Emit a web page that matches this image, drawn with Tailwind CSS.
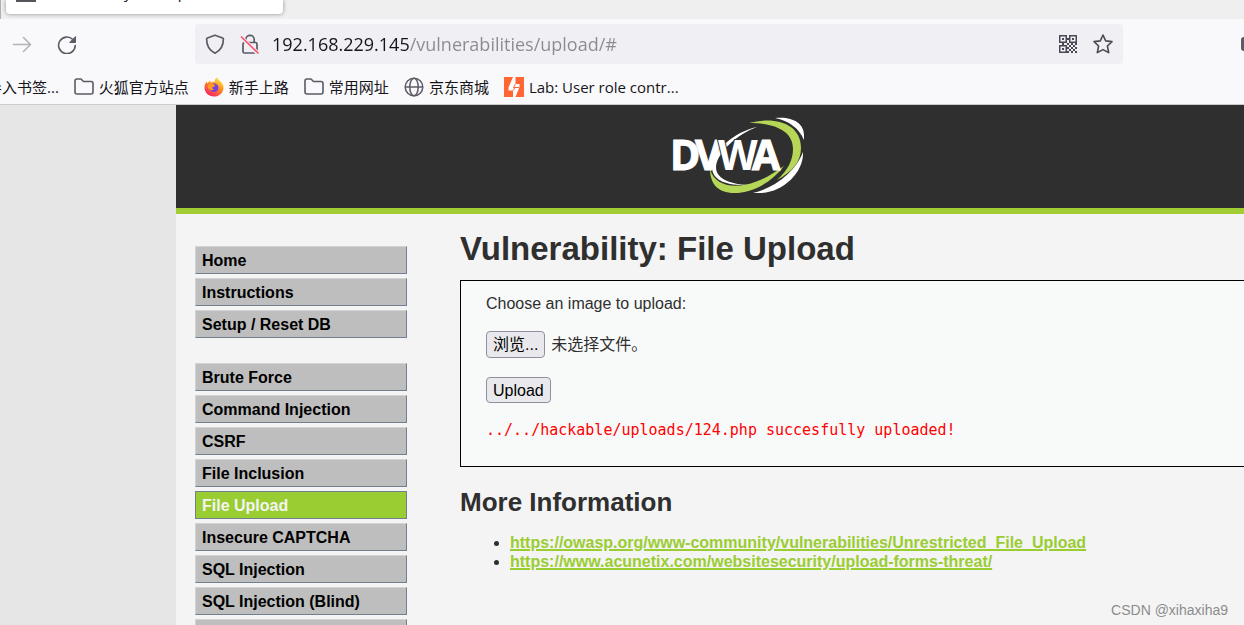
<!DOCTYPE html>
<html lang="zh-CN">
<head>
  <meta charset="UTF-8" />
  <meta name="viewport" content="width=device-width, initial-scale=1.0">
  <title>Vulnerability: File Upload :: DVWA</title>
  <script src="https://cdn.jsdelivr.net/npm/@tailwindcss/browser@4"></script>
</head>
<body class="h-screen overflow-hidden relative flex flex-col bg-[#e6e6e6] text-[#2f2f2f] font-['Liberation_Sans','Noto_Sans_CJK_SC',sans-serif]">

  <!-- Browser chrome -->
  <div class="shrink-0 bg-[#f9f9fb] border-b border-[#cccccc] text-[#15141a] font-['Open_Sans','Noto_Sans_CJK_SC',sans-serif]">

    <!-- Tab strip -->
    <div class="h-[19px] bg-[#efefef] border-l border-[#b0b0b0] pl-[5px] overflow-hidden">
      <div class="relative w-[277px] h-[14px] bg-white rounded-b shadow-[0_0_4px_rgba(0,0,0,0.4)] overflow-hidden">
        <div class="absolute left-[10px] top-0 w-5 h-[2px] bg-[#55555a]"></div>
        <span class="absolute left-[38px] -top-[18px] text-[15px] leading-5 whitespace-nowrap">Vulnerability: File Upload</span>
      </div>
    </div>

    <!-- Toolbar -->
    <div class="h-[50px] flex items-center pl-3">
      <button aria-label="Forward" class="w-5 h-5 shrink-0">
        <svg viewBox="0 0 20 20" class="w-5 h-5" fill="none" stroke="#b4b4b8" stroke-width="1.600" stroke-linecap="round" stroke-linejoin="round"><path d="M1.500 10.500H18.500M11.500 3.500l7 7-7 7"/></svg>
      </button>
      <button aria-label="Reload" class="w-5 h-5 shrink-0 ml-[25px]">
        <svg viewBox="0 0 20 20" class="w-5 h-5" fill="none" stroke="#5b5b66" stroke-width="1.600" stroke-linecap="round"><path d="M18.200 11.500A8.300 8.300 0 1 1 15.800 5.500"/><path d="M18.500 3V8.500h-5.500z" fill="#5b5b66" stroke-width="1" stroke-linejoin="round"/></svg>
      </button>
      <div class="ml-[118px] mr-[118px] flex-1 h-10 rounded bg-[#f0eff4] flex items-center px-[10px]">
        <svg viewBox="0 0 20 20" class="w-5 h-5 shrink-0" fill="none" stroke="#5b5b66" stroke-width="1.700" stroke-linejoin="round"><path d="M10 1.200l7.600 2.800c.5.200.8.600.8 1.100C18.400 11.500 16 16.500 10 19.200 4 16.500 1.600 11.500 1.600 5.100c0-.5.300-.9.800-1.100z"/></svg>
        <svg viewBox="0 0 20 20" class="w-5 h-5 shrink-0 ml-[15px]" fill="none" stroke="#5b5b66" stroke-width="1.700" stroke-linecap="round"><path d="M5.800 8V5.500a4.200 4.200 0 0 1 8.400 0V8"/><rect x="3" y="8.500" width="14" height="10.500" rx="1.500"/><path d="M1 3l17 16.500" stroke="#f0eff4" stroke-width="4"/><path d="M1.500 3l16.500 16" stroke="#ff4f6b"/></svg>
        <input type="text" aria-label="Address" value="192.168.229.145/vulnerabilities/upload/#" class="ml-3 flex-1 min-w-0 h-7 text-lg leading-7 outline-none text-transparent bg-clip-text bg-[linear-gradient(90deg,#15141a_137px,#8a8a90_137px)]">
        <button aria-label="QR code">
          <svg viewBox="0 0 18 18" class="w-[18px] h-[18px]" fill="#4a4a55"><path fill-rule="evenodd" d="M0 0h8v8H0zM1.500 1.500v5h5v-5zM10 0h8v8h-8zM11.500 1.500v5h5v-5zM0 10h8v8H0zM1.500 11.500v5h5v-5z"/><path d="M3 3h2v2H3zM13 3h2v2h-2zM3 13h2v2H3zM8 3h2v2H8zM3 8h2v2H3zM8 8h2v2H8zM12 8h2v2h-2zM16 8h2v2h-2zM10 10h2v2h-2zM14 10h2v2h-2zM8 12h2v2H8zM12 12h2v2h-2zM16 12h2v2h-2zM10 14h2v2h-2zM14 14h2v2h-2zM12 16h2v2h-2zM16 16h2v2h-2zM8 16h2v2H8z"/></svg>
        </button>
        <button aria-label="Bookmark this page" class="ml-4">
          <svg viewBox="0 0 20 20" class="w-5 h-5" fill="none" stroke="#4a4a55" stroke-width="1.600" stroke-linejoin="round"><path d="M10 1l2.700 5.900 6.300.7-4.600 4.400 1.300 6.600L10 15.600l-5.700 3 1.300-6.600L1 7.600l6.300-.7z"/></svg>
        </button>
      </div>
      <div class="w-[3px] h-[14px] rounded-l-full bg-[#5b5b66]"></div>
    </div>

    <!-- Bookmarks -->
    <nav class="h-[35px] flex items-center gap-[15px] text-[15px] leading-5 whitespace-nowrap">
      <a href="#" class="-ml-[13px]">导入书签...</a>
      <a href="#" class="flex items-center gap-[5px]">
        <svg viewBox="0 0 20 20" class="w-5 h-5" fill="none" stroke="#5b5b66" stroke-width="1.600" stroke-linejoin="round"><path d="M1 4A2 2 0 0 1 3 2h4l2.500 2.500H17a2 2 0 0 1 2 2v8.500a2 2 0 0 1-2 2H3a2 2 0 0 1-2-2z"/></svg>
        火狐官方站点
      </a>
      <a href="#" class="flex items-center gap-[5px]">
        <svg viewBox="0 0 20 20" class="w-5 h-5">
          <defs>
            <linearGradient id="fox" x1="0.800" y1="0" x2="0.200" y2="1"><stop offset="0" stop-color="#fff044"/><stop offset="0.450" stop-color="#ff8a1f"/><stop offset="1" stop-color="#f5156c"/></linearGradient>
          </defs>
          <path d="M10 19.500C4.700 19.500.5 15.500.5 10.500c0-2.600 1.100-4.500 2.300-6l.6 2 2.600-3 .8 2.200c1.200-.9 2.700-1 4-.7C10.500 3 11.500 1.300 13.200.3c.3 2 1.800 2.800 3.300 4.200 1.800 1.700 3 3.800 3 6.200 0 5-4.200 8.800-9.500 8.800z" fill="url(#fox)"/>
          <circle cx="10.200" cy="10.800" r="4.200" fill="#7a3fe0"/>
          <path d="M4 8c1.500-1.500 3.800-1.500 5.800-.5 1 .4 1.800.8 1.200 1.500-.7.700-2 .6-2.600 1.300-.6.800.4 1.900 1.700 1.900-1.500 1.600-5 .8-6.100-1z" fill="#ff9a22"/>
        </svg>
        新手上路
      </a>
      <a href="#" class="flex items-center gap-[5px]">
        <svg viewBox="0 0 20 20" class="w-5 h-5" fill="none" stroke="#5b5b66" stroke-width="1.600" stroke-linejoin="round"><path d="M1 4A2 2 0 0 1 3 2h4l2.500 2.500H17a2 2 0 0 1 2 2v8.500a2 2 0 0 1-2 2H3a2 2 0 0 1-2-2z"/></svg>
        常用网址
      </a>
      <a href="#" class="flex items-center gap-[5px]">
        <svg viewBox="0 0 20 20" class="w-5 h-5" fill="none" stroke="#5b5b66" stroke-width="1.500"><circle cx="10" cy="10" r="8.800"/><ellipse cx="10" cy="10" rx="4.200" ry="8.800"/><path d="M1.200 10h17.600"/></svg>
        京东商城
      </a>
      <a href="#" class="flex items-center gap-[5px]">
        <svg viewBox="0 0 20 20" class="w-5 h-5"><path d="M0 0h20v20H0z" fill="#ff6633"/><path d="M9 0h2.500v7H15.500v3L11.500 20H9v-6.500H4.500v-3z" fill="#fff"/><path d="M11.500 7L9.500 10.500H15M9 13.500L11 10.500" fill="none" stroke="#ff6633" stroke-width="1"/></svg>
        Lab: User role contr...
      </a>
    </nav>
  </div>

  <!-- Page -->
  <div class="flex-1 min-h-0 ml-44 bg-[#f4f4f4]">
    <header class="h-[109px] bg-[#2f2f2f] border-b-6 border-[#a1cc33] flex justify-center">
      <a href="#" aria-label="DVWA" class="mt-3 ml-[57px]">
        <svg viewBox="0 0 134 78" class="w-[134px] h-[78px]">
          <path d="M85 10C66 17 45 35 44 50c0 11 12 17 32 18-22 1-36-5-36-18C40 34 62 15 85 10z" fill="#fff"/>
          <path d="M77 6c27-7 52 1 52 25 0 14-9 24-24 32 11-10 16-20 16-31C121 14 103 6 77 6z" fill="#b5d657"/>
          <path d="M103 1c17-2 29 5 29 17v5C127 11 117 4 103 1zM131 35c1 20-20 41-44 41h-6c22-5 43-22 50-41z" fill="#fff"/>
          <path d="M38 52c4 16 23 21 45 13 11-4 19-9 29-16-12 16-31 27-50 27-16 0-24-9-24-24z" fill="#b5d657"/>
          <text x="-2 23 46 80" y="53" font-size="41" font-weight="700" fill="#fff" class="font-['Open_Sans',sans-serif]"><tspan stroke="#fff" stroke-width="1">DV</tspan><tspan stroke="#2f2f2f" stroke-width="2" paint-order="stroke">W</tspan><tspan stroke="#fff" stroke-width="1">A</tspan></text>
        </svg>
      </a>
    </header>

    <div class="flex">
      <!-- Main menu -->
      <nav class="w-[212px] shrink-0 ml-[19px] mt-8 font-bold text-base text-black">
        <ul class="flex flex-col gap-1 mb-[25px]">
          <li><a href="#" class="block h-7 pl-[6px] leading-7 bg-[#bebebe] border border-t-[#d3d3d3] border-l-[#d3d3d3] border-r-[#708090] border-b-[#708090]">Home</a></li>
          <li><a href="#" class="block h-7 pl-[6px] leading-7 bg-[#bebebe] border border-t-[#d3d3d3] border-l-[#d3d3d3] border-r-[#708090] border-b-[#708090]">Instructions</a></li>
          <li><a href="#" class="block h-7 pl-[6px] leading-7 bg-[#bebebe] border border-t-[#d3d3d3] border-l-[#d3d3d3] border-r-[#708090] border-b-[#708090]">Setup / Reset DB</a></li>
        </ul>
        <ul class="flex flex-col gap-1">
          <li><a href="#" class="block h-7 pl-[6px] leading-7 bg-[#bebebe] border border-t-[#d3d3d3] border-l-[#d3d3d3] border-r-[#708090] border-b-[#708090]">Brute Force</a></li>
          <li><a href="#" class="block h-7 pl-[6px] leading-7 bg-[#bebebe] border border-t-[#d3d3d3] border-l-[#d3d3d3] border-r-[#708090] border-b-[#708090]">Command Injection</a></li>
          <li><a href="#" class="block h-7 pl-[6px] leading-7 bg-[#bebebe] border border-t-[#d3d3d3] border-l-[#d3d3d3] border-r-[#708090] border-b-[#708090]">CSRF</a></li>
          <li><a href="#" class="block h-7 pl-[6px] leading-7 bg-[#bebebe] border border-t-[#d3d3d3] border-l-[#d3d3d3] border-r-[#708090] border-b-[#708090]">File Inclusion</a></li>
          <li><a href="#" class="block h-7 pl-[6px] leading-7 bg-[#9acd32] text-[#f4f4f4] border border-[#708090]">File Upload</a></li>
          <li><a href="#" class="block h-7 pl-[6px] leading-7 bg-[#bebebe] border border-t-[#d3d3d3] border-l-[#d3d3d3] border-r-[#708090] border-b-[#708090]">Insecure CAPTCHA</a></li>
          <li><a href="#" class="block h-7 pl-[6px] leading-7 bg-[#bebebe] border border-t-[#d3d3d3] border-l-[#d3d3d3] border-r-[#708090] border-b-[#708090]">SQL Injection</a></li>
          <li><a href="#" class="block h-7 pl-[6px] leading-7 bg-[#bebebe] border border-t-[#d3d3d3] border-l-[#d3d3d3] border-r-[#708090] border-b-[#708090]">SQL Injection (Blind)</a></li>
          <li><a href="#" aria-label="Weak Session IDs" class="block h-7 bg-[#bebebe] border border-t-[#d3d3d3] border-l-[#d3d3d3] border-r-[#708090] border-b-[#708090]"></a></li>
        </ul>
      </nav>

      <!-- Main body -->
      <main class="flex-1 ml-[53px] pt-[17px]">
        <h1 class="text-[33px] leading-9 font-bold mb-[13px]">Vulnerability: File Upload</h1>

        <form class="border border-r-0 border-black bg-[#f8fafa] pl-[25px] pt-[13px] pb-[26px] text-base leading-5">
          <p>Choose an image to upload:</p>
          <label for="uploaded" class="mt-[17px] flex items-center gap-[6px] leading-[27px]">
            <span class="h-[27px] px-[6px] leading-[25px] rounded border border-[#8f8f9d] bg-[#e9e9ed] text-black">浏览...</span>
            未选择文件。
          </label>
          <input id="uploaded" name="uploaded" type="file" class="sr-only">
          <button type="submit" class="mt-[19px] block h-[26px] px-[6px] leading-[26px] rounded border border-[#8f8f9d] bg-[#e9e9ed] text-black">Upload</button>
          <pre class="mt-[17px] text-[15px] leading-5 text-[#ff0000] font-['DejaVu_Sans_Mono',monospace]">../../hackable/uploads/124.php succesfully uploaded!</pre>
        </form>

        <h2 class="mt-5 text-[26px] leading-[30px] font-bold">More Information</h2>
        <ul class="mt-4 pl-[50px] list-disc text-base leading-[19px]">
          <li><a href="https://owasp.org/www-community/vulnerabilities/Unrestricted_File_Upload" class="font-bold underline decoration-2 text-[#9acd32]">https://owasp.org/www-community/vulnerabilities/Unrestricted_File_Upload</a></li>
          <li><a href="https://www.acunetix.com/websitesecurity/upload-forms-threat/" class="font-bold underline decoration-2 text-[#9acd32]">https://www.acunetix.com/websitesecurity/upload-forms-threat/</a></li>
        </ul>
      </main>
    </div>
  </div>

  <!-- Watermark -->
  <div class="absolute right-4 bottom-[6px] text-sm leading-[18px] text-[#8c8c8c]">CSDN @xihaxiha9</div>
</body>
</html>
